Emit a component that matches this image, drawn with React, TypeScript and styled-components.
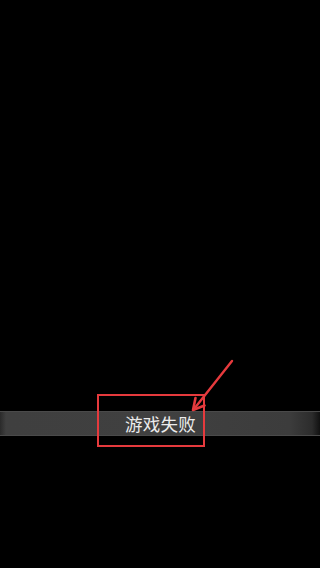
import React from "react";
import styled, { createGlobalStyle } from "styled-components";

const Global = createGlobalStyle`
  html, body { margin: 0; padding: 0; background: #000; }
  #root { width: 320px; height: 568px; }
`;

const Screen = styled.div`
  position: relative;
  width: 320px;
  height: 568px;
  background: #000;
  display: flex;
  flex-direction: column;
  padding-top: 411px;
  box-sizing: border-box;
  overflow: hidden;
`;

const Toast = styled.div`
  height: 25px;
  display: flex;
  align-items: center;
  justify-content: center;
  padding-left: 1px;
  background: linear-gradient(
    to right,
    #2a2a2a 0px,
    #3f3f3f 6px,
    #404040 50%,
    #3c3c3c 290px,
    #2c2c2c 312px,
    #111 320px
  );
  border-top: 1px solid #4a4a4a;
  border-bottom: 1px solid #4a4a4a;
  box-sizing: border-box;
`;

const ToastText = styled.span`
  font-family: "Noto Sans CJK SC", "Noto Sans", sans-serif;
  font-size: 17.5px;
  color: #ececec;
  line-height: 1;
  letter-spacing: 0.2px;
`;

const Highlight = styled.div`
  position: absolute;
  left: 97px;
  top: 394px;
  width: 108px;
  height: 53px;
  border: 2px solid #e63a3d;
  box-sizing: border-box;
`;

const Arrow = styled.svg`
  position: absolute;
  left: 0;
  top: 0;
  pointer-events: none;
`;

export default function App() {
  return (
    <>
      <Global />
      <Screen>
        <Toast>
          <ToastText>游戏失败</ToastText>
        </Toast>
        <Highlight />
        <Arrow width="320" height="568" viewBox="0 0 320 568">
          <line x1="232" y1="361" x2="194" y2="409" stroke="#e63a3d" strokeWidth="2.4" strokeLinecap="round" />
          <polyline points="195.5,398 193,410 204.5,405.5" fill="none" stroke="#e63a3d" strokeWidth="2.6" strokeLinecap="round" strokeLinejoin="round" />
        </Arrow>
      </Screen>
    </>
  );
}
